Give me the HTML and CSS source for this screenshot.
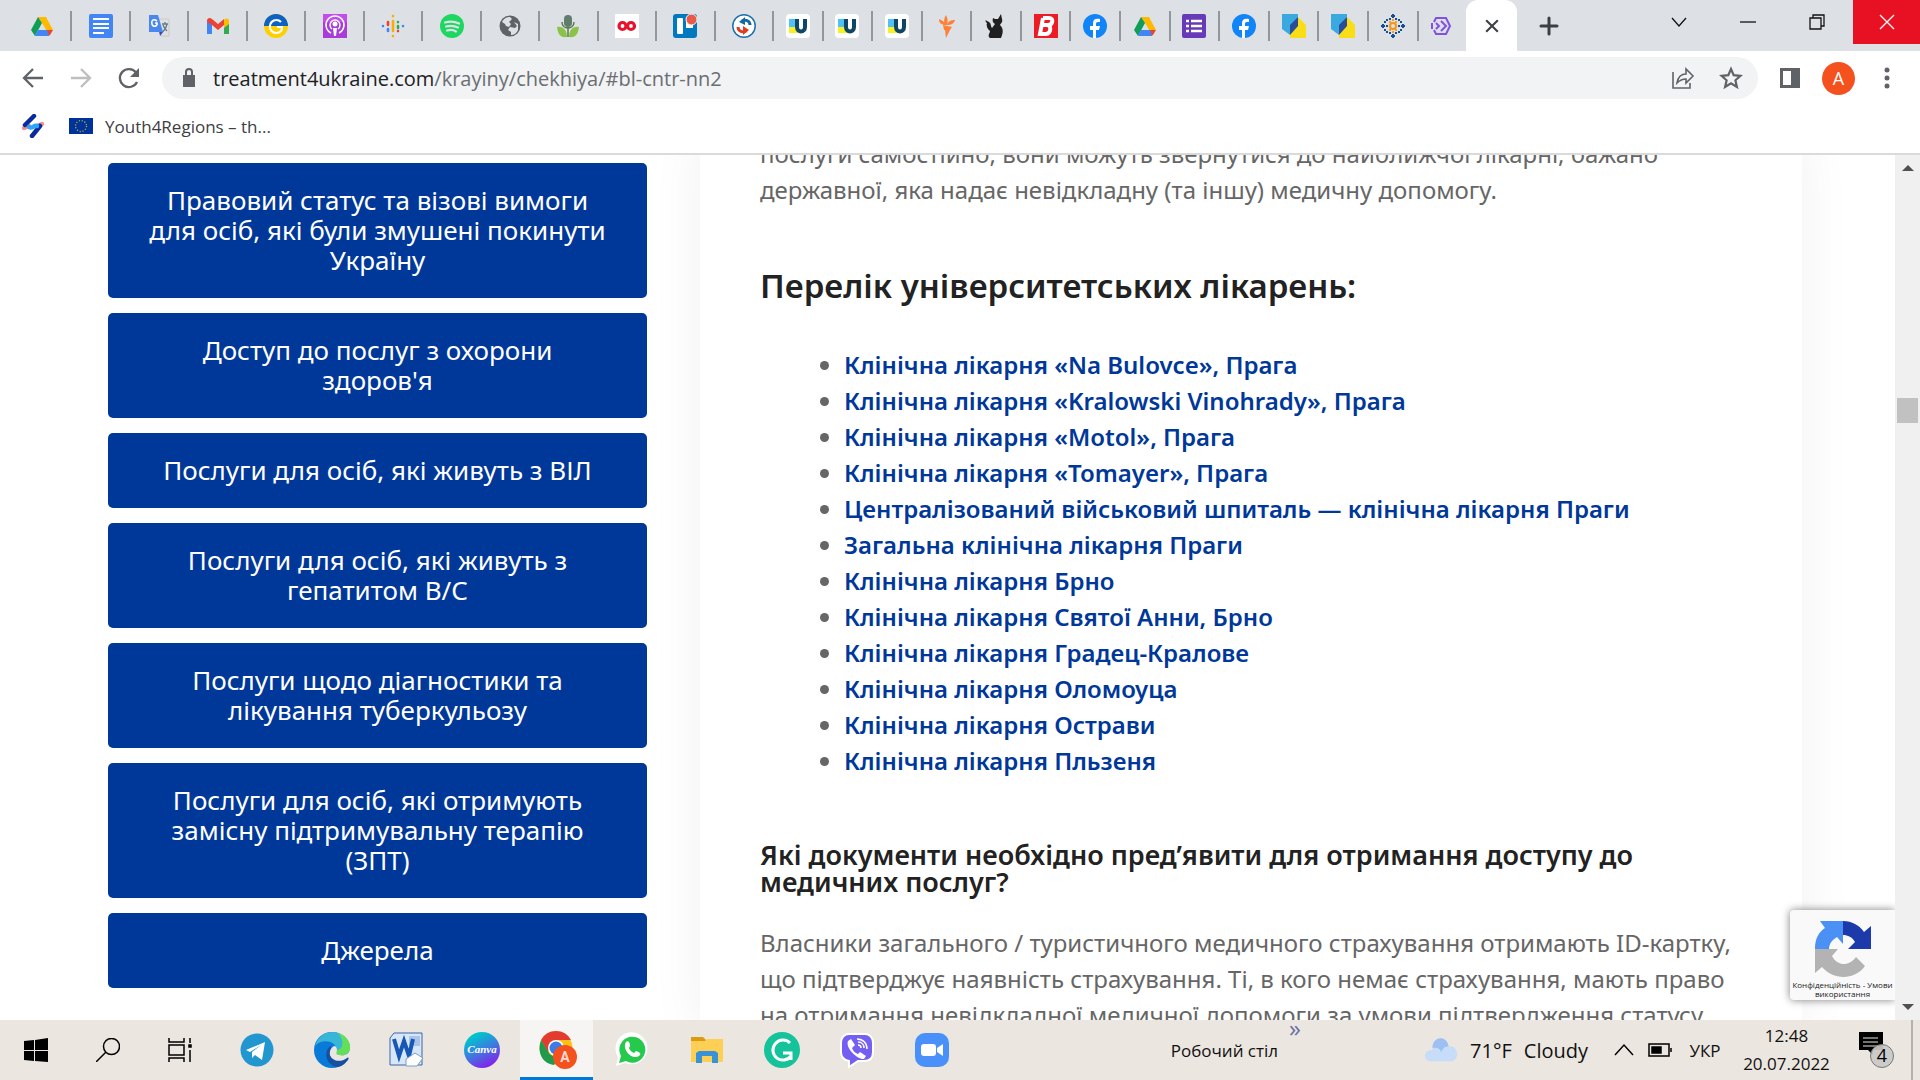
FILE: index.html
```html
<!DOCTYPE html>
<html lang="uk">
<head>
<meta charset="utf-8">
<title>Чехія</title>
<meta name="viewport" content="width=device-width, initial-scale=1">
<link rel="stylesheet" href="styles.css">
</head>
<body>
<svg class="defs" aria-hidden="true">
  <symbol id="drive" viewBox="0 0 24 24"><path fill="#ffba00" d="M8 3h8l7 13h-7z"/><path fill="#dde1e6" d="M12 9l4 7H8z"/><path fill="#ea4335" d="M16 16h7l-3 5-2 1z"/><path fill="#0f9d58" d="M8 3l4 6-7 13-4-6z"/><path fill="#4285f4" d="M8 16h9l2 6H5z"/></symbol>
  <symbol id="ulogo" viewBox="0 0 24 24"><rect width="24" height="24" rx="4" fill="#fff"/><path fill="#4fc1f9" d="M3 5h9v8H3z"/><path fill="#f9ef22" d="M3 13h9v6H3z"/><path fill="none" stroke="#0e4766" stroke-width="4" d="M11 5v8c0 6 8 6 8 0V5"/></symbol>
  <symbol id="fb" viewBox="0 0 24 24"><circle cx="12" cy="12" r="12" fill="#1184f7"/><path fill="#fff" d="M10 24v-8H7v-4h3V9c0-4 3-5 7-4v3c-3 0-4 0-4 2v2h4l-1 4h-3v8z"/></symbol>
  <symbol id="shield" viewBox="0 0 24 24"><path fill="#3aa9e0" d="M0 0h16v8l-8 13-8-6z"/><path fill="#f9dd16" d="M16 3l8 8v13H8v-4z"/><path fill="#2b4c9b" d="M8 11l8-8v9l-8 9z"/></symbol>
</svg>
<header class="browser">
  <nav class="tabstrip" aria-label="Вкладки">
    <div class="tabs pinned">
      <button class="tab" aria-label="Drive"><svg><use href="#drive"/></svg></button>
      <button class="tab" aria-label="Docs"><svg viewBox="0 0 24 24"><rect width="24" height="24" rx="2" fill="#4285f4"/><path stroke="#fff" stroke-width="2" d="M4 5h16M4 10h16M4 14h16M4 19h11"/></svg></button>
      <button class="tab" aria-label="Translate"><svg viewBox="0 0 24 24"><path fill="#e0e0e0" stroke="#c8c8c8" d="M9 5h13v17H14z"/><path fill="#3949ab" d="M12 17h5l-4 5z"/><path fill="#4a87ee" d="M2 1h9l5 17H2z"/><path fill="none" stroke="#fff" stroke-width="1.6" d="M10 7c-4-3-6 0-5 3 1 4 6 2 5-1H8"/><path fill="none" stroke="#607d8b" stroke-width="1.3" d="M15 10h6M18 8v2m2 0c-1 4-2 6-4 7m0-6c1 3 3 5 4 6"/></svg></button>
      <button class="tab" aria-label="Gmail"><svg viewBox="0 0 24 24"><path fill="#4285f4" d="M1 6l5 4v10H1z"/><path fill="#34a853" d="M18 10l5-4v14h-5z"/><path fill="#fbbc04" d="M18 6c2-3 5-1 5 1v3l-5 4z"/><path fill="#ea4335" d="M1 7c0-3 3-4 5-2l6 5 6-5v6l-6 5-6-5-5-3z"/></svg></button>
      <button class="tab" aria-label="Новини"><svg viewBox="0 0 24 24"><circle cx="12" cy="12" r="12" fill="#ffd000"/><path fill="#0b62c4" d="M0 12a12 12 0 0124 0z"/><path fill="none" stroke="#fff" stroke-width="2.2" d="M17 8a6.500 6.500 0 100 9c1-1 1-2 1-4h-5"/></svg></button>
      <button class="tab" aria-label="Podcasts"><svg viewBox="0 0 24 24"><rect width="24" height="24" fill="#a93bd8"/><path fill="#d45bf5" d="M0 0h24v8H0z" opacity=".6"/><g fill="none" stroke="#fff" stroke-width="1.5"><path d="M8 19a9 9 0 118 0"/><path d="M9 15a5 5 0 116 0"/></g><circle cx="12" cy="10" r="2.500" fill="#fff"/><path fill="#fff" d="M10 14h4l-1 8h-2z"/></svg></button>
      <button class="tab" aria-label="Google Podcasts"><svg viewBox="0 0 24 24" fill="none" stroke-width="2.600" stroke-linecap="round"><path stroke="#4285f4" d="M2 12v.1M22 12v.1"/><path stroke="#ea4335" d="M7 8v3M17 17v.1"/><path stroke="#4285f4" d="M7 15v2"/><path stroke="#fbab05" d="M12 7v10M12 2v.1M12 22v.1"/><path stroke="#34a853" d="M17 12v2M17 8v.1"/></svg></button>
      <button class="tab" aria-label="Spotify"><svg viewBox="0 0 24 24"><circle cx="12" cy="12" r="12" fill="#1ed760"/><path fill="none" stroke="#dde1e6" stroke-width="2.200" stroke-linecap="round" d="M5 8.500c5-1.500 10-1 14 1M6 12.500c4-1 8-1 12 1M7 16.500c3-1 6-1 9 1"/></svg></button>
      <button class="tab" aria-label="Сайт"><svg viewBox="0 0 24 24"><circle cx="12" cy="12" r="10.500" fill="#5f6368"/><path fill="#dde1e6" d="M4 8c2-4 5-5 8-5l2 2-3 3 2 2-2 3-3-1-1-2zM16 8l4 2v6c-1 3-4 5-7 5v-3l-3-2 2-3 5 1 2-2z"/></svg></button>
      <button class="tab" aria-label="Подкаст"><svg viewBox="0 0 24 24"><path fill="#8bc34a" d="M1 13c6-1 10 3 10 10-7 1-9-3-10-10zM23 13c-6-1-10 3-10 10 7 1 9-3 10-10z"/><path stroke="#55743f" fill="none" stroke-width="1.400" d="M6 8c0 8 12 8 12 0M12 13v10"/><rect x="8" y="1" width="8" height="12" rx="4" fill="#607d6b"/></svg></button>
      <button class="tab" aria-label="Нескінченність"><svg viewBox="0 0 24 24"><path fill="#fff" d="M0 0h24v24H0z"/><g fill="none" stroke="#e8132a" stroke-width="3.200"><circle cx="7.500" cy="12" r="3.500"/><circle cx="16" cy="12" r="3.500"/></g></svg></button>
      <button class="tab" aria-label="Trello"><svg viewBox="0 0 24 24"><rect width="24" height="24" rx="3" fill="#0079bf"/><rect x="4" y="4" width="6" height="16" rx="1" fill="#fff"/><path fill="#fff" d="M13 4h7v10h-7z"/><circle cx="18.500" cy="5.500" r="5.500" fill="#eb5a46" stroke="#fff"/></svg></button>
      <button class="tab" aria-label="Синхронізація"><svg viewBox="0 0 24 24"><circle cx="12" cy="12" r="11.200" fill="#fff" stroke="#1c71ac" stroke-width="1.500"/><path fill="none" stroke="#1668a5" stroke-width="3" d="M18 11c0-4-4-6-8-4"/><path fill="#1668a5" d="M7 8l6-5v8z"/><path fill="none" stroke="#dd3d20" stroke-width="3" d="M6 13c0 4 4 6 8 4"/><path fill="#dd3d20" d="M17 16l-6-4v9z"/></svg></button>
    </div>
    <div class="tabs regular">
      <button class="tab" aria-label="U"><svg><use href="#ulogo"/></svg></button>
      <button class="tab" aria-label="U"><svg><use href="#ulogo"/></svg></button>
      <button class="tab" aria-label="U"><svg><use href="#ulogo"/></svg></button>
      <button class="tab" aria-label="Птах"><svg viewBox="0 0 24 24" fill="#ff8138"><path d="M8 11l9 2-2 3H9zM10 16h5l-4 8zM10 11C8 6 10 3 11 1c2 4 2 6 1 10zM9 11C5 10 4 8 4 5c4 2 6 3 6 6zM12 11c1-4 4-5 8-5-1 4-4 5-8 5z"/></svg></button>
      <button class="tab" aria-label="Кіт"><svg viewBox="0 0 24 24" fill="#202020"><path d="M9 4l2 1h3l3-5 1 5c1 3-1 4-2 6 4 4 3 8 1 13H6c-3-2 0-5 0-7-3-2-4-6-3-8-2-1-2-4 0-2 5 2 3 4 5 7l3-4c-2-1-3-3-2-6z"/></svg></button>
      <button class="tab" aria-label="B"><svg viewBox="0 0 24 24"><path fill="#ed1c24" d="M0 0h24v24H0z"/><path fill="none" stroke="#fff" stroke-width="4" d="M9 4h6c5 0 4 7-1 7H9h4c5 0 4 9-1 9H6L9 4"/></svg></button>
      <button class="tab" aria-label="Facebook"><svg><use href="#fb"/></svg></button>
      <button class="tab" aria-label="Drive"><svg><use href="#drive"/></svg></button>
      <button class="tab" aria-label="Forms"><svg viewBox="0 0 24 24"><rect width="24" height="24" rx="2" fill="#673ab7"/><path stroke="#fff" stroke-width="2.400" d="M4 7h3M9 7h11M4 12h3M9 12h11M4 17h3M9 17h11"/></svg></button>
      <button class="tab" aria-label="Facebook"><svg><use href="#fb"/></svg></button>
      <button class="tab" aria-label="Україна"><svg><use href="#shield"/></svg></button>
      <button class="tab" aria-label="Україна"><svg><use href="#shield"/></svg></button>
      <button class="tab" aria-label="Візерунок"><svg viewBox="0 0 24 24"><g fill="#174f91"><path d="M11 0h2v4h-2zM11 20h2v4h-2zM0 11h4v2H0zM20 11h4v2h-4z"/><path d="M10 1h4v2h-4zM10 21h4v2h-4zM1 10h2v4H1zM21 10h2v4h-2zM5 5h2v2H5zM17 5h2v2h-2zM5 17h2v2H5zM17 17h2v2h-2zM3 7h2v2H3zM19 7h2v2h-2zM3 15h2v2H3zM19 15h2v2h-2zM8 4h2v2H8zM14 4h2v2h-2zM8 18h2v2H8zM14 18h2v2h-2zM5 11h2v2H5zM17 11h2v2h-2z"/></g><path fill="#f4a021" d="M8 7h2v2H8zM14 7h2v2h-2zM8 15h2v2H8zM14 15h2v2h-2zM11 5h2v2h-2zM11 17h2v2h-2z"/><circle cx="12" cy="12" r="3" fill="none" stroke="#f4941c" stroke-width="2"/></svg></button>
      <button class="tab" aria-label="Стрілки"><svg viewBox="0 0 24 24" fill="none" stroke="#8151e0" stroke-width="2"><path d="M4 8l2-4h10l4 8-4 8H6l-2-4M2 9v6M6 9l3 3-3 3M11 7l5 5-5 5"/></svg></button>
    </div>
    <button class="tab active" aria-label="Закрити вкладку"><svg viewBox="0 0 24 24"><path stroke="#3c4043" stroke-width="2.500" d="M5 5l14 14M19 5L5 19"/></svg></button>
    <button class="newtab" aria-label="Нова вкладка"><svg viewBox="0 0 24 24"><path stroke="#3c4043" stroke-width="3" stroke-linecap="round" d="M12 4v16M4 12h16"/></svg></button>
    <div class="winctl">
      <button aria-label="Пошук вкладок"><svg viewBox="0 0 24 24"><path d="M5 8l7 8 7-8"/></svg></button>
      <button aria-label="Згорнути"><svg viewBox="0 0 24 24"><path d="M4 12h16"/></svg></button>
      <button aria-label="Відновити"><svg viewBox="0 0 24 24"><path d="M5 8h11v11H5zM8 8V5h11v11h-3"/></svg></button>
      <button class="close" aria-label="Закрити"><svg viewBox="0 0 24 24"><path d="M5 5l14 14M19 5L5 19"/></svg></button>
    </div>
  </nav>
  <div class="toolbar">
    <button class="nav" aria-label="Назад"><svg viewBox="0 0 24 24"><path d="M22 12H3M12 3l-9 9 9 9"/></svg></button>
    <button class="nav off" aria-label="Вперед"><svg viewBox="0 0 24 24"><path d="M2 12h19M12 3l9 9-9 9"/></svg></button>
    <button class="nav" aria-label="Оновити"><svg viewBox="0 0 24 24"><path d="M20 16a9 9 0 11-1-9.500"/><path fill="#5f6368" stroke="none" d="M22 2v9h-9z"/></svg></button>
    <div class="omnibox">
      <svg class="lock" viewBox="0 0 24 24"><path fill="#5f6368" d="M6 9h12v12H6z"/><path fill="none" stroke="#5f6368" stroke-width="2" d="M9 10V6a3 3 0 016 0v4"/></svg>
      <label class="host" for="url">treatment4ukraine.com</label><input id="url" class="url" value="/krayiny/chekhiya/#bl-cntr-nn2">
      <button class="act" aria-label="Поділитися"><svg viewBox="0 0 24 24"><path d="M2 6v16h17v-5M6 17c1-6 4-9 9-9V3l7 7-7 7v-4c-4 0-6 1-9 4z"/></svg></button>
      <button class="act" aria-label="Закладка"><svg viewBox="0 0 24 24"><path stroke-width="2.200" d="M12 3l2.700 6.200 6.700.6-5 4.500 1.500 6.700-5.900-3.600L6.100 21l1.500-6.700-5-4.500 6.700-.6z"/></svg></button>
    </div>
    <button class="nav side" aria-label="Бічна панель"><svg viewBox="0 0 24 24"><path d="M2 2h20v20H2z" fill="#5f6368" stroke="none"/><path fill="#fff" stroke="none" d="M5 5h8v14H5z"/></svg></button>
    <button class="avatar" aria-label="Профіль">A</button>
    <button class="nav" aria-label="Меню"><svg viewBox="0 0 24 24"><g fill="#5f6368" stroke="none"><circle cx="12" cy="4" r="2.500"/><circle cx="12" cy="12" r="2.500"/><circle cx="12" cy="20" r="2.500"/></g></svg></button>
  </div>
  <nav class="bookmarks" aria-label="Закладки">
    <a href="#s" aria-label="S"><svg viewBox="0 0 24 24" fill="none" stroke-width="4.500" stroke-linecap="round"><path stroke="#f98a94" d="M3 14l5-2M16 12l5-2"/><path stroke="#0b2a9b" d="M4 11l9-9M11 22l8-10"/><path stroke="#2ba5f7" d="M8 13c3 2 5-2 8-1"/></svg></a>
    <a href="#y4r"><svg viewBox="0 0 24 24"><path fill="#039" d="M0 4h24v16H0z"/><circle cx="12" cy="12" r="5.500" fill="none" stroke="#b5a53c" stroke-width="1.300" stroke-dasharray="1.200 1.680"/></svg><span>Youth4Regions – th...</span></a>
  </nav>
</header>
<div class="viewport">
  <main class="page">
    <nav class="menu" aria-label="Розділи">
      <a href="#n1">Правовий статус та візові вимоги для осіб, які були змушені покинути Україну</a>
      <a href="#n2">Доступ до послуг з охорони здоров'я</a>
      <a href="#n3">Послуги для осіб, які живуть з ВІЛ</a>
      <a href="#n4">Послуги для осіб, які живуть з гепатитом В/С</a>
      <a href="#n5">Послуги щодо діагностики та лікування туберкульозу</a>
      <a href="#n6">Послуги для осіб, які отримують замісну підтримувальну терапію (ЗПТ)</a>
      <a href="#n7">Джерела</a>
    </nav>
    <article class="card">
      <p>послуги самостійно, вони можуть звернутися до найближчої лікарні, бажано<br>державної, яка надає невідкладну (та іншу) медичну допомогу.</p>
      <h2>Перелік університетських лікарень:</h2>
      <ul>
        <li><a href="#h1">Клінічна лікарня «Na Bulovce», Прага</a></li>
        <li><a href="#h2">Клінічна лікарня «Kralowski Vinohrady», Прага</a></li>
        <li><a href="#h3">Клінічна лікарня «Motol», Прага</a></li>
        <li><a href="#h4">Клінічна лікарня «Tomayer», Прага</a></li>
        <li><a href="#h5">Централізований військовий шпиталь — клінічна лікарня Праги</a></li>
        <li><a href="#h6">Загальна клінічна лікарня Праги</a></li>
        <li><a href="#h7">Клінічна лікарня Брно</a></li>
        <li><a href="#h8">Клінічна лікарня Святої Анни, Брно</a></li>
        <li><a href="#h9">Клінічна лікарня Градец-Кралове</a></li>
        <li><a href="#h10">Клінічна лікарня Оломоуца</a></li>
        <li><a href="#h11">Клінічна лікарня Острави</a></li>
        <li><a href="#h12">Клінічна лікарня Пльзеня</a></li>
      </ul>
      <h3>Які документи необхідно пред’явити для отримання доступу до<br>медичних послуг?</h3>
      <p>Власники загального / туристичного медичного страхування отримають ID-картку,<br>що підтверджує наявність страхування. Ті, в кого немає страхування, мають право<br>на отримання невідкладної медичної допомоги за умови підтвердження статусу</p>
    </article>
  </main>
  <aside class="captcha">
    <svg viewBox="0 0 56 58"><path fill="#4a90f5" d="M0 29C0 18 4 12 10 8L5 1h23v23l-6-7c-5 3-8 7-8 12z"/><path fill="#1c3aa9" d="M28 1c9 0 16 4 21 11l7-6v23H33l7-7c-3-5-7-7-12-7z"/><path fill="#b3b3b3" d="M0 29h23l-6 7c5 10 17 11 24 1l9 9C39 61 18 60 7 47l-7 6z"/></svg>
    <p>Конфіденційність - Умови використання</p>
  </aside>
  <div class="scrollbar" aria-hidden="true">
    <svg viewBox="0 0 12 6"><path d="M0 6l6-6 6 6z"/></svg>
    <span class="thumb"></span>
    <svg class="down" viewBox="0 0 12 6"><path d="M0 0l6 6 6-6z"/></svg>
  </div>
</div>
<footer class="taskbar">
  <div class="system">
    <button aria-label="Пуск"><svg viewBox="0 0 24 24"><path d="M0 3l10-1v10H0zM11 2l13-2v12H11zM0 13h10v10L0 22zM11 13h13v11l-13-1z"/></svg></button>
    <button aria-label="Пошук"><svg viewBox="0 0 24 24" class="line"><circle cx="15.500" cy="8.500" r="8"/><path d="M10 14L0 24"/></svg></button>
    <button aria-label="Подання завдань"><svg viewBox="0 0 24 24" class="line"><path d="M1 0v4h15V0M1 7h15v10H1zM1 24v-4h15v4M22 0v5M22 12v12"/><path fill="#000" d="M21 7h2v2h-2z"/></svg></button>
  </div>
  <div class="apps">
    <button aria-label="Telegram"><svg viewBox="0 0 36 36"><circle cx="18" cy="18" r="16.500" fill="#2196cf"/><path fill="#fff" d="M7 18l19-8-3 18-7-5-3 3v-6l9-7-11 7z"/></svg></button>
    <button aria-label="Edge"><svg viewBox="0 0 36 36"><circle cx="18" cy="18" r="18" fill="#0a7ad8"/><path fill="#38b6d8" d="M1 14C4 4 12 0 18 0c11 0 18 8 18 15 0 6-5 9-10 8-5 0-3-2-3-5C22 9 8 6 1 14z"/><path fill="#63df58" d="M24 1c8 2 12 9 12 14 0 6-5 9-10 8-5 0-3-2-3-5 6 0 8-9 1-17z"/><path fill="#1551a0" d="M17 14c-8 4-6 20 7 21 5-1 8-4 10-8-8 4-19 0-17-13z"/><path fill="#ebe6e0" d="M20 14c-8 5-4 17 6 16 4 0 7-1 9-3l2-3-1-7c-1 5-5 7-10 6-5 0-3-2-3-5 0-2-1-4-3-4z"/><path fill="#1551a0" d="M15 19c0 9 10 13 18 7 2-1 2 0 1 2-9 10-22 4-19-9z"/><path fill="#63df58" d="M30 5c4 3 6 7 6 10 0 6-5 9-10 8-2 0-4-1-3-3 6 1 10-6 7-15z"/></svg></button>
    <button aria-label="Word"><svg viewBox="0 0 36 36"><path fill="#d8e7f8" stroke="#3a64a8" d="M5 1h28v32H1V6z"/><path fill="#a9c4e8" d="M20 4h11v10H20z"/><path fill="none" stroke="#1757b5" stroke-width="4" d="M5 7l5 17 5-15 5 15 4-17"/><path fill="#fff" stroke="#7b9cca" d="M17 27l9-6 8 5-6 8H17z"/></svg></button>
    <button aria-label="Canva"><svg viewBox="0 0 36 36"><linearGradient id="cv" x1="0" y1="0" x2=".5" y2="1"><stop stop-color="#00c4cc" offset=".2"/><stop offset=".6" stop-color="#3b7de0"/><stop offset="1" stop-color="#7d2ae8"/></linearGradient><circle cx="18" cy="18" r="18" fill="url(#cv)"/><text class="canva" x="18" y="21" text-anchor="middle">Canva</text></svg></button>
    <button class="current" aria-label="Chrome"><svg viewBox="0 0 40 40"><circle cx="18" cy="18" r="16.500" fill="#fbc116"/><path fill="#e33b2e" d="M3 10a17 17 0 0130 0H18l-8 12z"/><path fill="#229a4b" d="M3 10l8 13c2 3 6 4 10 3l-5 9C3 33-1 21 3 10z"/><circle cx="18" cy="18" r="8" fill="#fff"/><circle cx="18" cy="18" r="6.500" fill="#3c7ce8"/><circle cx="27" cy="27" r="12" fill="#f4511e"/><text class="badge-a" x="27" y="32" text-anchor="middle">A</text></svg></button>
    <button aria-label="WhatsApp"><svg viewBox="0 0 36 36"><path fill="#fff" d="M2 34l2-9a16 16 0 117 6z"/><path fill="#25c94c" d="M5 31l2-7a13 13 0 115 5z"/><path fill="#fff" d="M12 10c2-2 4 0 4 4l-1 2c1 3 3 4 5 5l2-2c4 1 5 3 4 4-6 7-19-5-14-13z"/></svg></button>
    <button aria-label="Провідник"><svg viewBox="0 0 36 36"><path fill="#dc9b0e" d="M2 5h12l3 3v4H2z"/><path fill="#fdcf55" d="M2 9h14l2-2h16v23H2z"/><path fill="#3792d8" d="M7 31V21l3-2h16l3 2v10h-6v-7H13v7z"/></svg></button>
    <button aria-label="Grammarly"><svg viewBox="0 0 36 36"><circle cx="18" cy="18" r="18" fill="#15c39a"/><path fill="none" stroke="#fff" stroke-width="3" d="M26 11a10 10 0 10 1 13M19 21h8v7"/></svg></button>
    <button aria-label="Viber"><svg viewBox="0 0 36 36"><path fill="#7360f2" stroke="#fff" stroke-width="2" d="M10 2h16c5 0 8 4 8 9v9c0 6-3 9-9 9h-6l-9 6v-6c-5-1-8-4-8-9v-9c0-5 3-9 8-9z"/><path fill="#fff" d="M9 9l3-2 4 6-3 3c1 3 3 5 6 6l2-2 6 4-2 3C19 28 6 16 9 9z"/><path fill="none" stroke="#fff" stroke-width="1.500" d="M18 7c6 0 10 4 10 10M19 10c4 0 6 3 6 6M19 13c2 0 3 1 3 3"/></svg></button>
    <button aria-label="Zoom"><svg viewBox="0 0 36 36"><rect x="1" y="1" width="34" height="34" rx="10" fill="#4a90fa"/><rect x="7" y="12" width="15" height="12" rx="3" fill="#fff"/><path fill="#fff" d="M23 16l6-4v12l-6-4z"/></svg></button>
  </div>
  <div class="tray">
    <span class="desk">Робочий стіл</span>
    <button class="more" aria-label="Ще">»</button>
    <button class="weather"><svg viewBox="0 0 36 28"><path fill="#c7dcf8" d="M9 14C8-1 25-2 26 10c7-1 10 6 9 10s-4 6-7 6H8c-9 0-10-12 1-12z"/><path fill="#9dbff2" d="M9 12C9-1 24-2 26 10c-5 0-7 4-8 7 0-4-4-6-9-5z"/></svg><span>71°F</span><span>Cloudy</span></button>
    <button class="caret" aria-label="Приховані піктограми"><svg viewBox="0 0 24 24" class="line"><path d="M3 17l9-10 9 10"/></svg></button>
    <button class="battery" aria-label="Батарея"><svg viewBox="0 0 24 24" class="line"><path d="M1 6h20v12H1zM23 10v4"/><path fill="#000" d="M4 9h9v6H4z"/></svg></button>
    <button class="lang">УКР</button>
    <button class="clock"><span>12:48</span><span>20.07.2022</span></button>
    <button class="notes" aria-label="Сповіщення"><svg viewBox="0 0 36 40"><path d="M1 2h24v18H15v5l-5-5H1z"/><path stroke="#ebe6e0" d="M5 8h15M5 12h15M5 16h15"/><circle cx="24" cy="26" r="11.500" fill="#c9c9c8" stroke="#777" fill-opacity=".92"/><text class="count" x="24" y="32" text-anchor="middle">4</text></svg></button>
  </div>
</footer>
</body>
</html>
```
FILE: styles.css
```css
* { box-sizing: border-box; }
body { margin: 0; height: 100vh; display: flex; flex-direction: column; overflow: hidden; background: #fff; font-family: "Open Sans", "Noto Sans", sans-serif; }
button { margin: 0; padding: 0; border: 0; background: none; font: inherit; color: inherit; display: flex; align-items: center; justify-content: center; }
a { text-decoration: none; color: inherit; }
svg { width: 24px; height: 24px; flex: none; display: block; }
.defs { width: 0; height: 0; position: absolute; }

.browser { flex: none; border-bottom: 2px solid #dadada; }
.tabstrip { display: flex; height: 51px; padding-left: 14px; background: #dde1e6; }
.tabs { display: flex; align-items: center; }
.pinned { width: 760px; }
.regular { width: 692px; }
.tabs .tab { flex: 1; height: 30px; border-right: 2px solid #93969b; }
.regular .tab:last-child { border-right: 0; }
.active { width: 51px; background: #fff; border-radius: 12px 12px 0 0; }
.active svg { width: 20px; height: 20px; }
.newtab { width: 64px; }
.winctl { margin-left: auto; display: flex; height: 44px; }
.winctl button { width: 69px; }
.winctl svg { fill: none; stroke: #111; stroke-width: 1.3; }
.winctl .close { width: 67px; margin-left: 2px; background: #e81123; }
.winctl .close svg { stroke: #fff; }

.toolbar { display: flex; align-items: center; height: 54px; padding: 0 9px; }
.nav { width: 48px; height: 42px; }
.nav svg { fill: none; stroke: #5f6368; stroke-width: 2.3; }
.off svg { stroke: #bcbec0; }
.omnibox { flex: 1; display: flex; align-items: center; height: 42px; margin: 0 8px 0 9px; padding: 0 3px 0 15px; border-radius: 21px; background: #f1f3f4; font-size: 20px; }
.lock { margin-right: 12px; }
.host { color: #202124; }
.url { flex: 1; min-width: 0; padding: 0; border: 0; background: none; font: inherit; color: #6b6e72; }
.act { width: 48px; height: 42px; }
.act svg { fill: none; stroke: #5f6368; stroke-width: 1.6; }
.avatar { width: 33px; height: 33px; margin: 0 8px; border-radius: 50%; background: #f4511e; color: #fff; font-size: 18px; }
.bookmarks { display: flex; align-items: center; gap: 24px; height: 48px; padding: 0 21px 6px; font-size: 17px; color: #3c4043; }
.bookmarks a { display: flex; align-items: center; gap: 12px; }

.viewport { flex: 1; min-height: 0; position: relative; display: flex; font-family: "Noto Sans", sans-serif; }
.page { flex: 1; display: grid; grid-template-columns: 539px minmax(0, 1102px); gap: 53px; padding-left: 108px; overflow: hidden; }
.menu { display: flex; flex-direction: column; gap: 15px; padding-top: 8px; }
.menu a { padding: 22px 39px 23px; border-radius: 5px; background: #003899; color: #fff; font-size: 26px; line-height: 30px; text-align: center; }
.card { padding: 0 60px; margin-top: -19px; box-shadow: 0 0 50px rgba(0, 0, 0, .06); color: #666; font-size: 24px; line-height: 36px; white-space: nowrap; }
.card p { margin: 0; }
.card h2 { margin: 60px 0 43px; font-size: 33px; line-height: 36px; font-weight: 600; color: #222; }
.card ul { margin: 0; padding-left: 84px; }
.card li a { color: #003899; font-weight: 600; }
.card h3 { margin: 62px 0 30px; font-size: 27px; line-height: 27px; font-weight: 600; color: #222; }
.captcha { position: absolute; right: 25px; bottom: 20px; width: 105px; height: 90px; padding-top: 10px; border-radius: 4px 0 0 4px; background: #f9f9f9; box-shadow: 0 0 8px #808080; clip-path: inset(-10px 0 -10px -10px); }
.captcha svg { width: 56px; height: 58px; margin-left: 25px; }
.captcha p { margin: 2px 0 0; font: 8px/9px "Open Sans", sans-serif; text-align: center; color: #222; }
.scrollbar { flex: none; width: 25px; display: flex; flex-direction: column; align-items: center; padding: 10px 0; background: #f0f0f0; }
.scrollbar svg { width: 12px; height: 6px; fill: #505050; }
.thumb { width: 21px; height: 25px; margin-top: 227px; background: #c1c1c1; }
.scrollbar .down { margin-top: auto; }

.taskbar { flex: none; display: flex; height: 60px; background: #ebe6e0; color: #111; padding-right: 7px; }
.line { fill: none; stroke: #000; stroke-width: 1.5; }
.system, .apps, .tray { display: flex; }
.system button { width: 72px; }
.apps { margin-left: 4px; gap: 2px; }
.apps button { width: 73px; }
.apps svg { width: 36px; height: 36px; }
.apps .current { padding: 3px 0 0 3px; background: #f7f5f3; border-bottom: 3px solid #0078d7; }
.apps .current svg { width: 40px; height: 40px; }
.canva { font: italic bold 11px "Liberation Serif", serif; fill: #fff; }
.badge-a { font: bold 14px Roboto, sans-serif; fill: #fbd9cd; }
.tray { margin-left: auto; align-items: center; font-size: 17px; border-right: 2px solid #b5b1ad; }
.tray button { height: 60px; }
.more { width: 34px; align-items: flex-start; color: #6d6da8; font-size: 24px; line-height: 16px; }
.weather { margin-left: 112px; font-size: 20px; gap: 12px; }
.weather svg { width: 34px; height: 28px; }
.caret { width: 36px; margin-left: 18px; }
.battery { width: 36px; }
.lang { width: 54px; }
.clock { width: 109px; flex-direction: column; line-height: 28px; }
.notes { width: 70px; }
.notes svg { width: 36px; height: 40px; }
.count { font: 18px "Open Sans", sans-serif; }
```
